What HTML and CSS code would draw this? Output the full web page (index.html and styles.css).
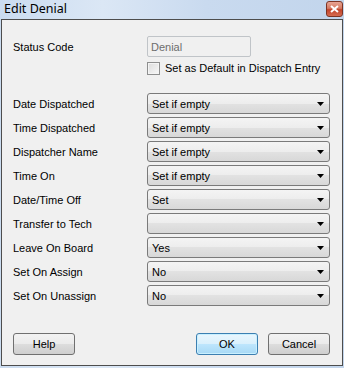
FILE: index.html
```html
<!DOCTYPE html>
<html lang="en">
<head>
    <meta charset="UTF-8">
    <link rel="stylesheet" href="styles.css">
    <title>Edit Denial</title>
</head>
<body>
    <div class="window">
        <div class="titlebar">
            <span class="title">Edit Denial</span>
            <span class="close-btn">
                <svg width="9" height="8" viewBox="0 0 9 8"><path d="M1 1 L8 7 M8 1 L1 7" stroke="#fff" stroke-width="2"/></svg>
            </span>
        </div>
        <div class="client">
            <div class="row status-row">
                <label>Status Code</label>
                <div class="textbox disabled">Denial</div>
            </div>
            <div class="check-row">
                <span class="checkbox"></span>
                <span>Set as Default in Dispatch Entry</span>
            </div>

            <div class="fields">
                <div class="row">
                    <label>Date Dispatched</label>
                    <div class="combo"><span>Set if empty</span><svg width="7" height="4" viewBox="0 0 7 4"><path d="M0 0 H7 L3.5 4 Z" fill="#000"/></svg></div>
                </div>
                <div class="row">
                    <label>Time Dispatched</label>
                    <div class="combo"><span>Set if empty</span><svg width="7" height="4" viewBox="0 0 7 4"><path d="M0 0 H7 L3.5 4 Z" fill="#000"/></svg></div>
                </div>
                <div class="row">
                    <label>Dispatcher Name</label>
                    <div class="combo"><span>Set if empty</span><svg width="7" height="4" viewBox="0 0 7 4"><path d="M0 0 H7 L3.5 4 Z" fill="#000"/></svg></div>
                </div>
                <div class="row">
                    <label>Time On</label>
                    <div class="combo"><span>Set if empty</span><svg width="7" height="4" viewBox="0 0 7 4"><path d="M0 0 H7 L3.5 4 Z" fill="#000"/></svg></div>
                </div>
                <div class="row">
                    <label>Date/Time Off</label>
                    <div class="combo"><span>Set</span><svg width="7" height="4" viewBox="0 0 7 4"><path d="M0 0 H7 L3.5 4 Z" fill="#000"/></svg></div>
                </div>
                <div class="row">
                    <label>Transfer to Tech</label>
                    <div class="combo"><span></span><svg width="7" height="4" viewBox="0 0 7 4"><path d="M0 0 H7 L3.5 4 Z" fill="#000"/></svg></div>
                </div>
                <div class="row">
                    <label>Leave On Board</label>
                    <div class="combo"><span>Yes</span><svg width="7" height="4" viewBox="0 0 7 4"><path d="M0 0 H7 L3.5 4 Z" fill="#000"/></svg></div>
                </div>
                <div class="row">
                    <label>Set On Assign</label>
                    <div class="combo"><span>No</span><svg width="7" height="4" viewBox="0 0 7 4"><path d="M0 0 H7 L3.5 4 Z" fill="#000"/></svg></div>
                </div>
                <div class="row">
                    <label>Set On Unassign</label>
                    <div class="combo"><span>No</span><svg width="7" height="4" viewBox="0 0 7 4"><path d="M0 0 H7 L3.5 4 Z" fill="#000"/></svg></div>
                </div>
            </div>

            <div class="buttons">
                <button class="btn">Help</button>
                <div class="right-buttons">
                    <button class="btn default">OK</button>
                    <button class="btn">Cancel</button>
                </div>
            </div>
        </div>
    </div>
</body>
</html>
```

FILE: styles.css
```css
body {
    margin: 0;
    background: #c2d5ec;
    font-family: "Liberation Sans", Arial, sans-serif;
    font-size: 11px;
    color: #000;
}

.window {
    width: 344px;
    height: 368px;
    display: flex;
    flex-direction: column;
    background: linear-gradient(90deg, #cbdcf0 0%, #dbe7f5 30%, #c9daef 60%, #c2d5ec 100%);
}

.titlebar {
    height: 19px;
    display: flex;
    align-items: center;
    justify-content: space-between;
    padding: 0 1px 0 4px;
}

.title {
    font-family: "Noto Sans", "Open Sans", sans-serif;
    font-size: 12.5px;
    color: #000;
    margin-top: -2px;
}

.close-btn {
    width: 15px;
    height: 14px;
    margin-top: -1px;
    border: 1px solid #7d3424;
    border-radius: 3px;
    background: linear-gradient(#e8a493 0%, #d47a63 45%, #c2432a 55%, #d56b4f 100%);
    display: flex;
    align-items: center;
    justify-content: center;
}

.client {
    flex: 1;
    margin: 0 1px 2px 1px;
    border: 1px solid #4d4d4d;
    background: #f0f0f0;
    padding: 16px 11px 0 11px;
    display: flex;
    flex-direction: column;
}

.row {
    display: flex;
    align-items: center;
}

.row label {
    width: 134px;
}

.textbox {
    height: 21px;
    width: 104px;
    box-sizing: border-box;
    border: 1px solid #c0c4c8;
    border-radius: 2px;
    padding-left: 3px;
    display: flex;
    align-items: center;
}

.textbox.disabled {
    background: #f0f0f0;
    color: #6d6d6d;
}

.check-row {
    display: flex;
    align-items: center;
    margin: 4px 0 0 134px;
    height: 14px;
}

.checkbox {
    width: 11px;
    height: 11px;
    border: 1px solid #8e8f8f;
    background: linear-gradient(135deg, #dcdcdc, #f8f8f8);
    box-shadow: inset 0 0 0 1px #f4f4f4;
    margin-right: 5px;
}

.fields {
    margin-top: 18px;
    display: flex;
    flex-direction: column;
    gap: 3px;
}

.combo {
    width: 183px;
    height: 21px;
    box-sizing: border-box;
    border: 1px solid #7a7a7a;
    border-radius: 3px;
    background: linear-gradient(#f4f4f4 0%, #ededed 50%, #e2e2e2 50%, #d8d8d8 100%);
    display: flex;
    align-items: center;
    justify-content: space-between;
    padding: 0 5px 0 4px;
}

.buttons {
    margin-top: auto;
    margin-bottom: 10px;
    display: flex;
    justify-content: space-between;
    padding-right: 1px;
}

.right-buttons {
    display: flex;
    gap: 10px;
}

.btn {
    width: 62px;
    height: 22px;
    font-family: "Liberation Sans", Arial, sans-serif;
    font-size: 11px;
    color: #000;
    border: 1px solid #707070;
    border-radius: 3px;
    background: linear-gradient(#f2f2f2 0%, #ebebeb 50%, #dddddd 50%, #cfcfcf 100%);
    padding: 0;
}

.btn.default {
    border-color: #3c7fb1;
    background: linear-gradient(#eaf6fd 0%, #d9f0fc 50%, #bee6fd 50%, #a7d9f5 100%);
    box-shadow: inset 0 0 0 1px #c9f0ff;
}
```
